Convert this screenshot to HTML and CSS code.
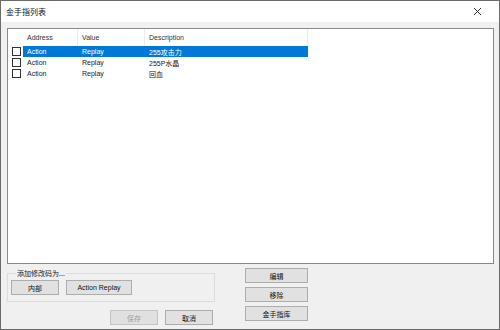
FILE: index.html
```html
<!DOCTYPE html>
<html lang="zh">
<head>
    <meta charset="UTF-8">
    <title>金手指列表</title>
    <link rel="stylesheet" href="styles.css">
</head>
<body>
    <div class="window">
        <div class="titlebar">
            <span class="title">金手指列表</span>
            <svg class="close" width="9" height="9" viewBox="0 0 9 9">
                <path d="M1 1 L8 8 M8 1 L1 8" stroke="#333" stroke-width="1" fill="none"/>
            </svg>
        </div>
        <div class="content">
            <div class="list">
                <div class="row head">
                    <span class="cell check"></span>
                    <span class="cell">Address</span>
                    <span class="cell">Value</span>
                    <span class="cell">Description</span>
                </div>
                <div class="row selected">
                    <span class="cell check"><span class="box"></span></span>
                    <span class="cell">Action</span>
                    <span class="cell">Replay</span>
                    <span class="cell">255攻击力</span>
                </div>
                <div class="row">
                    <span class="cell check"><span class="box"></span></span>
                    <span class="cell">Action</span>
                    <span class="cell">Replay</span>
                    <span class="cell">255P水晶</span>
                </div>
                <div class="row">
                    <span class="cell check"><span class="box"></span></span>
                    <span class="cell">Action</span>
                    <span class="cell">Replay</span>
                    <span class="cell">回血</span>
                </div>
            </div>
            <div class="bottom">
                <div class="left-col">
                    <fieldset class="group">
                        <legend>添加修改码为...</legend>
                        <div class="btn-row">
                            <button class="btn btn-inner">内部</button>
                            <button class="btn btn-ar">Action Replay</button>
                        </div>
                    </fieldset>
                    <div class="btn-row end">
                        <button class="btn btn-dlg" disabled>保存</button>
                        <button class="btn btn-dlg">取消</button>
                    </div>
                </div>
                <div class="right-col">
                    <button class="btn btn-side">编辑</button>
                    <button class="btn btn-side">移除</button>
                    <button class="btn btn-side">金手指库</button>
                </div>
            </div>
        </div>
    </div>
</body>
</html>
```

FILE: styles.css
```css
* {
    padding: 0;
    margin: 0;
    box-sizing: border-box;
}

body {
    width: 500px;
    height: 330px;
    overflow: hidden;
    font-family: "Liberation Sans", "Noto Sans CJK SC", sans-serif;
    font-size: 7px;
    color: #1a1a1a;
}

.window {
    width: 500px;
    height: 330px;
    border: 1px solid #6a6a6a;
    background-color: #f0f0f0;
    display: flex;
    flex-direction: column;
}

.titlebar {
    height: 21px;
    background-color: #ffffff;
    display: flex;
    align-items: center;
    justify-content: space-between;
    padding: 0 17px 0 5px;
}

.title {
    font-family: "Noto Sans CJK SC", sans-serif;
    font-size: 8px;
    color: #111;
}

.content {
    flex: 1;
    padding: 6px 5px 0 6px;
    display: flex;
    flex-direction: column;
}

.list {
    height: 236px;
    background-color: #ffffff;
    border: 1px solid #8a8a8a;
}

.row {
    display: grid;
    grid-template-columns: 15px 55px 67px 163px;
    height: 11px;
    align-items: center;
}

.row.head {
    height: 17px;
    color: #333;
}

.row.head .cell + .cell {
    border-right: 1px solid #ececec;
    height: 100%;
    display: flex;
    align-items: center;
}

.cell {
    padding-left: 4px;
    white-space: nowrap;
    height: 100%;
    display: flex;
    align-items: center;
}

.cell.check {
    padding-left: 4px;
}

.box {
    width: 9px;
    height: 9px;
    border: 1px solid #333;
    background-color: #fff;
}

.row.selected .cell:not(.check) {
    background-color: #0078d7;
    color: #ffffff;
}

.bottom {
    display: flex;
    gap: 30px;
    margin-top: 4px;
}

.left-col {
    width: 208px;
    display: flex;
    flex-direction: column;
}

.group {
    border: 1px solid #dcdcdc;
    padding: 2px 3px 2px 3px;
    height: 34px;
}

.group legend {
    font-family: "Noto Sans CJK SC", sans-serif;
    font-size: 7px;
    padding: 0 1px;
    margin-left: 5px;
    line-height: 10px;
}

.btn-row {
    display: flex;
    gap: 7px;
}

.btn-row.end {
    justify-content: flex-end;
    margin-top: 8px;
    padding-right: 2px;
}

.btn {
    font-family: "Liberation Sans", "Noto Sans CJK SC", sans-serif;
    font-size: 7px;
    background-color: #e1e1e1;
    border: 1px solid #adadad;
    color: #111;
    height: 15px;
}

.btn:disabled {
    color: #a0a0a0;
    border-color: #c4c4c4;
    background-color: #e0e0e0;
}

.btn-inner {
    width: 48px;
}

.btn-ar {
    width: 66px;
}

.btn-dlg {
    width: 48px;
}

.right-col {
    width: 63px;
    display: flex;
    flex-direction: column;
    gap: 4px;
}

.btn-side {
    width: 63px;
    height: 15px;
}
```
